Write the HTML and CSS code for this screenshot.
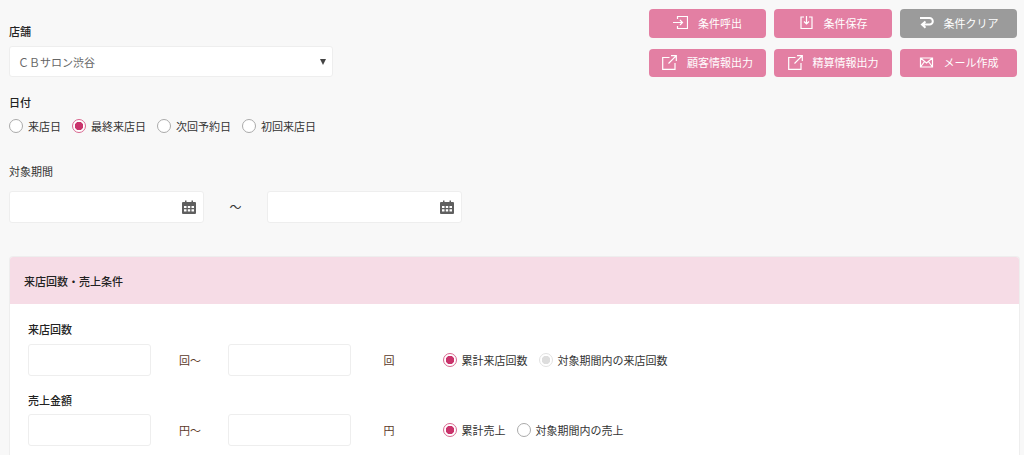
FILE: index.html
```html
<!DOCTYPE html>
<html lang="ja">
<head>
    <meta charset="UTF-8">
    <meta name="viewport" content="width=device-width, initial-scale=1.0">
    <title>条件検索</title>
    <link rel="stylesheet" href="styles.css">
</head>
<body>

    <div class="top">
        <div class="conditions">
            <label class="label label-bold" for="shop">店舗</label>
            <div class="select-wrap">
                <select id="shop" class="select">
                    <option>ＣＢサロン渋谷</option>
                </select>
            </div>

            <div class="label label-bold label-date">日付</div>
            <div class="radios">
                <label class="radio"><input type="radio" name="date">来店日</label>
                <label class="radio"><input type="radio" name="date" checked>最終来店日</label>
                <label class="radio"><input type="radio" name="date">次回予約日</label>
                <label class="radio"><input type="radio" name="date">初回来店日</label>
            </div>
        </div>

        <div class="buttons">
            <button type="button" class="btn">
                <svg class="icon" viewBox="0 0 15 15"><path d="M4.500 4V1.500H14.500V13.500H4.500V11M0 7.500H9.500M7 5L9.500 7.500L7 10"/></svg>
                条件呼出
            </button>
            <button type="button" class="btn">
                <svg class="icon" viewBox="0 0 15 15"><path d="M5 2H2V13.500H13V2H10M7.500 1V9M5 6.500L7.500 9L10 6.500"/></svg>
                条件保存
            </button>
            <button type="button" class="btn btn-gray">
                <svg class="icon icon-thick" viewBox="0 0 15 15"><path d="M1 3H10.500a3.300 3.300 0 0 1 0 6.600H4M6.500 6.500L3 9.600L6.500 12.700"/></svg>
                条件クリア
            </button>
            <button type="button" class="btn">
                <svg class="icon" viewBox="0 0 15 15"><path d="M7.500 2.500H0.700V14.300H13V8M9 0.700H14.300V6M14.300 0.700L6.500 8.500"/></svg>
                顧客情報出力
            </button>
            <button type="button" class="btn">
                <svg class="icon" viewBox="0 0 15 15"><path d="M7.500 2.500H0.700V14.300H13V8M9 0.700H14.300V6M14.300 0.700L6.500 8.500"/></svg>
                精算情報出力
            </button>
            <button type="button" class="btn">
                <svg class="icon" viewBox="0 0 15 15"><path d="M1.500 3H13.500V12H1.500ZM1.500 3L7.500 8L13.500 3M1.500 12L5.500 6.500M13.500 12L9.500 6.500"/></svg>
                メール作成
            </button>
        </div>
    </div>

    <div class="label label-period">対象期間</div>
    <div class="period">
        <div class="date-field">
            <input type="text" class="input">
            <svg class="calendar" viewBox="0 0 14 14"><path d="M1 2H3V0.500H4.500V2H9.500V0.500H11V2H13a1 1 0 0 1 1 1V13a1 1 0 0 1-1 1H1a1 1 0 0 1-1-1V3a1 1 0 0 1 1-1zM2 6V8H4.500V6zM5.800 6V8H8.200V6zM9.500 6V8H12V6zM2 9.300V11.500H4.500V9.300zM5.800 9.300V11.500H8.200V9.300zM9.500 9.300V11.500H12V9.300z" fill-rule="evenodd"/></svg>
        </div>
        <span class="tilde">～</span>
        <div class="date-field">
            <input type="text" class="input">
            <svg class="calendar" viewBox="0 0 14 14"><path d="M1 2H3V0.500H4.500V2H9.500V0.500H11V2H13a1 1 0 0 1 1 1V13a1 1 0 0 1-1 1H1a1 1 0 0 1-1-1V3a1 1 0 0 1 1-1zM2 6V8H4.500V6zM5.800 6V8H8.200V6zM9.500 6V8H12V6zM2 9.300V11.500H4.500V9.300zM5.800 9.300V11.500H8.200V9.300zM9.500 9.300V11.500H12V9.300z" fill-rule="evenodd"/></svg>
        </div>
    </div>

    <section class="panel">
        <h2 class="panel-title">来店回数・売上条件</h2>
        <div class="panel-body">
            <div class="label label-bold">来店回数</div>
            <div class="range">
                <input type="text" class="input input-small">
                <span class="unit">回～</span>
                <input type="text" class="input input-small">
                <span class="unit unit-end">回</span>
                <div class="radios">
                    <label class="radio"><input type="radio" name="visits" checked>累計来店回数</label>
                    <label class="radio"><input type="radio" name="visits" class="radio-disabled">対象期間内の来店回数</label>
                </div>
            </div>

            <div class="label label-bold label-sales">売上金額</div>
            <div class="range">
                <input type="text" class="input input-small">
                <span class="unit">円～</span>
                <input type="text" class="input input-small">
                <span class="unit unit-end">円</span>
                <div class="radios">
                    <label class="radio"><input type="radio" name="sales" checked>累計売上</label>
                    <label class="radio"><input type="radio" name="sales">対象期間内の売上</label>
                </div>
            </div>
        </div>
    </section>

</body>
</html>
```

FILE: styles.css
```css
html {
    overflow: hidden;
}
body {
    font-family: "Noto Sans CJK JP", "Noto Sans", sans-serif;
    font-size: 11px;
    line-height: 16px;
    background-color: #f8f8f8;
    color: #333;
    margin: 0;
    padding: 9px 4px 0 9px;
}
.top {
    display: flex;
    justify-content: space-between;
    align-items: flex-start;
}
.conditions {
    width: 324px;
    padding-top: 14px;
}
.label {
    display: block;
}
.label-bold {
    font-weight: 500;
    color: #222;
}
.label-date {
    margin-top: 17px;
}
.label-period {
    margin-top: 29px;
}
.label-sales {
    margin-top: 16px;
}
.select-wrap {
    position: relative;
    margin-top: 7px;
}
.select-wrap::after {
    content: "";
    position: absolute;
    right: 7px;
    top: 13px;
    border-left: 3.500px solid transparent;
    border-right: 3.500px solid transparent;
    border-top: 6px solid #444;
}
.select {
    display: block;
    width: 100%;
    height: 31px;
    padding: 0 8px;
    appearance: none;
    font-family: inherit;
    font-size: 11px;
    color: #666;
    background-color: #fff;
    border: 1px solid #eee;
    border-radius: 3px;
}
.radios {
    display: flex;
    gap: 11px;
    margin-top: 8px;
}
.radio {
    display: flex;
    align-items: center;
    gap: 5px;
}
.radio input {
    appearance: none;
    flex: none;
    width: 14px;
    height: 14px;
    margin: 0;
    background-color: #fff;
    border: 1.500px solid #aaa;
    border-radius: 50%;
}
.radio input:checked {
    border-color: #d9668f;
    background: radial-gradient(circle, #c9336b 0 4px, #fff 4.500px);
}
.radio input.radio-disabled {
    border-color: #e2e2e2;
    background: radial-gradient(circle, #ddd 0 4px, #fff 4.500px);
}
.buttons {
    display: grid;
    grid-template-columns: 117px 118px 117px;
    grid-template-rows: 29px 28px;
    gap: 11px 8px;
    margin-right: 3px;
}
.btn {
    display: flex;
    align-items: center;
    justify-content: center;
    gap: 10px;
    padding: 0 0 2px;
    font-family: inherit;
    font-size: 11px;
    color: #fff;
    background-color: #e37fa3;
    border: none;
    border-radius: 4px;
}
.btn-gray {
    background-color: #9b9b9b;
}
.icon {
    flex: none;
    width: 15px;
    height: 15px;
    fill: none;
    stroke: #fff;
    stroke-width: 1.200;
}
.icon-thick {
    stroke-width: 2;
}
.period {
    display: flex;
    align-items: center;
    margin-top: 12px;
}
.date-field {
    position: relative;
    width: 195px;
}
.calendar {
    position: absolute;
    right: 8px;
    top: 9px;
    width: 14px;
    height: 14px;
    fill: #5f5f5f;
}
.tilde {
    width: 63px;
    text-align: center;
    font-size: 12px;
}
.input {
    display: block;
    box-sizing: border-box;
    width: 100%;
    height: 32px;
    padding: 0 8px;
    background-color: #fff;
    border: 1px solid #eee;
    border-radius: 3px;
}
.panel {
    margin: 33px 0 0 0;
    background-color: #fff;
    border: 1px solid #eee;
    border-bottom: none;
    border-radius: 4px 4px 0 0;
}
.panel-title {
    margin: 0;
    padding: 16px 14px 15px;
    font-size: 11px;
    font-weight: 500;
    color: #222;
    background-color: #f6dce6;
    border-radius: 3px 3px 0 0;
}
.panel-body {
    padding: 17px 18px 40px;
}
.range {
    display: flex;
    align-items: center;
    margin-top: 6.500px;
}
.range .radios {
    margin: 0;
}
.input-small {
    width: 123px;
}
.unit {
    width: 76.500px;
    padding-left: 28px;
    box-sizing: border-box;
    color: #5b3a2a;
}
.unit-end {
    width: 92px;
    padding-left: 33px;
}
```
